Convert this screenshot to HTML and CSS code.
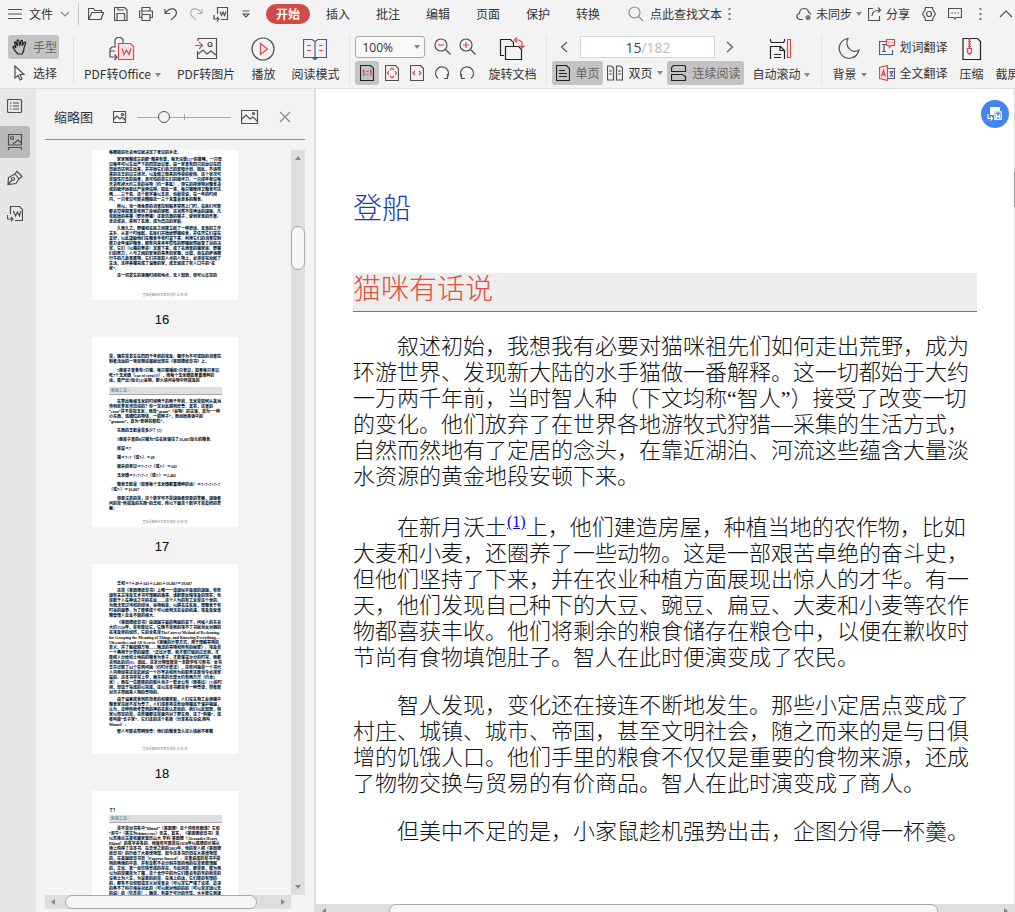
FILE: index.html
```html
<!DOCTYPE html>
<html lang="zh-CN">
<head>
    <meta charset="UTF-8">
    <meta name="viewport" content="width=device-width, initial-scale=1.0">
    <title>PDF 阅读</title>
    <link rel="stylesheet" href="styles.css">
</head>
<body>
    <header class="toolbar">
        <div class="menu-bar">
            <button class="file-menu">
                <svg width="14" height="14" viewBox="0 0 14 14"><path d="M0 2.5h14M0 7h14M0 11.5h14"/></svg>
                文件
                <svg class="muted" width="10" height="14" viewBox="0 0 10 14"><path d="M1 5l4 4 4-4"/></svg>
            </button>
            <div class="quick">
                <button title="打开"><svg width="16" height="14" viewBox="0 0 16 14"><path d="M.5 12.5v-11h5l1.500 2h6.500v2M.5 12.500l3.500-7h11.500l-2.500 7z"/></svg></button>
                <button title="保存"><svg width="14" height="14" viewBox="0 0 14 14"><path d="M.5.5h10l2.500 2.500v10.500H.5zM3 13V6.500h7.500V13M4 .5V3h6"/></svg></button>
                <button title="打印"><svg width="14" height="14" viewBox="0 0 14 14"><path d="M3 4V.5h8V4M3 10.500H.5V4h13v6.500H11M3 7.500h8v6H3zM2 6h2"/></svg></button>
                <button title="撤销"><svg width="14" height="14" viewBox="0 0 14 14"><path d="M1 2v4.500h5M1.500 6.500C4 1 12 0 12.500 6c0 3-2.500 4-5.500 7"/></svg></button>
                <button title="重做" class="off"><svg width="14" height="14" viewBox="0 0 14 14"><path d="M13 2v4.500H8M12.500 6.500C10 1 2 0 1.500 6c0 3 2.500 4 5.500 7"/></svg></button>
                <button title="导出"><svg width="16" height="16" viewBox="0 0 16 16"><path d="M4.500 8V1.500h10v12H8M7 5.500l1.500 4L10 6l1.500 3.500 1.500-4M1 9v4h5M4 11l2 2-2 2.500"/></svg></button>
                <button title="更多"><svg width="8" height="8" viewBox="0 0 8 8"><path d="M.5 1h7M1 4h6L4 7z"/></svg></button>
            </div>
            <nav class="tabs">
                <button class="active">开始</button>
                <button>插入</button>
                <button>批注</button>
                <button>编辑</button>
                <button>页面</button>
                <button>保护</button>
                <button>转换</button>
            </nav>
            <button class="search">
                <svg class="muted" width="16" height="16" viewBox="0 0 16 16"><circle cx="6.500" cy="6.500" r="5.500"/><path d="M10.500 10.500L15 15"/></svg>
                点此查找文本
                <svg width="3" height="14" viewBox="0 0 3 14"><path class="solid" d="M.5 1h2v2h-2zM.5 6h2v2h-2zM.5 11h2v2h-2z"/></svg>
            </button>
            <div class="account">
                <button>
                    <svg width="16" height="14" viewBox="0 0 16 14"><path d="M7 12.500H4C0 12 0 7 3.500 6.500 3.500 0 12 0 12.500 5.500c1.500 0 2 1 2.500 2"/><circle class="solid" cx="12" cy="10.500" r="2.500"/></svg>
                    未同步<i class="caret"></i>
                </button>
                <button>
                    <svg width="14" height="14" viewBox="0 0 14 14"><path d="M5 1.500H.5v12h11V9M4 9c0-4 3-6 8.500-6M10 .5L12.500 3 10 5.500"/></svg>
                    分享
                </button>
                <button title="设置"><svg width="14" height="14" viewBox="0 0 14 14"><path d="M3.500.5h7L11 3l2.500 4L11 11l-.5 2.500h-7L3 11 .5 7 3 3z"/><circle cx="7" cy="7" r="2.500"/></svg></button>
                <button title="反馈"><svg width="14" height="14" viewBox="0 0 14 14"><path d="M.5 1.500h13v9H8L7 12l-1-1.500H.5zM3.500 6h1.500M6.500 6H8M9.500 6H11"/></svg></button>
                <button title="更多" class="far"><svg width="3" height="14" viewBox="0 0 3 14"><path class="solid" d="M.5 1h2v2h-2zM.5 6h2v2h-2zM.5 11h2v2h-2z"/></svg></button>
                <button title="收起" class="far"><svg width="14" height="14" viewBox="0 0 14 14"><path d="M1 10l6-6 6 6"/></svg></button>
            </div>
        </div>

        <div class="ribbon">
            <div class="rows mode">
                <button class="small on">
                    <svg class="dark" width="16" height="16" viewBox="0 0 16 16"><path d="M5 14C2 11 2 10 1 8c0-1 1-1 3 1L2.500 4c0-1.500 1-1.500 1.500 0l1.500 3L5 2c0-1.500 1.500-1.500 2 0l.5 5L9 2c.5-1 1.500-1 1.500.5L10 7l2-3.500c1-1 2 0 1.500 1L12 9c0 3-1 4-2 6H6z"/></svg>
                    手型
                </button>
                <button class="small">
                    <svg width="16" height="16" viewBox="0 0 16 16"><path d="M3 1v12l3-2.500L8 15l2-1-2-4.500h4z"/></svg>
                    选择
                </button>
            </div>
            <div class="big-group">
                <button class="big">
                    <svg width="26" height="24" viewBox="0 0 26 24"><path d="M6 8V2.500L8 .5h4l2 2V6M6 5v5H3l-2 2v2h5M1 14v6h7M5.500 17.500L8 20l-2.500 3"/><g class="red"><path class="tint" d="M9.500 6.500h12l3 3v13h-15z"/><path d="M13 11.500l2 6 2.500-4.500 2.500 4.500 2-6"/></g></svg>
                    <span>PDF转Office<i class="caret"></i></span>
                </button>
                <button class="big">
                    <svg width="24" height="24" viewBox="0 0 24 24"><path d="M4 4V1.500h18.500v20H3.500V14M4 17l5-4 4 4 4-3 5 4"/><circle cx="16" cy="7.500" r="2"/><path class="red" d="M1 8.500h7M5 5l3.500 3.500L5 12"/></svg>
                    <span>PDF转图片</span>
                </button>
                <button class="big">
                    <svg width="24" height="24" viewBox="0 0 24 24"><circle cx="12" cy="12" r="11"/><path class="red tint" d="M9.500 6.500v11l7-5.500z"/></svg>
                    <span>播放</span>
                </button>
                <button class="big">
                    <svg width="24" height="24" viewBox="0 0 24 24"><path class="navy" d="M.5 2.500h8.500l3 2 3-2h8.500v18H.5zM12 4.500v18M9 20.500l3 2 3-2"/><path class="red" d="M4 8.500h4M4 13.500h4M16 8.500h4M16 13.500h4"/></svg>
                    <span>阅读模式</span>
                </button>
            </div>
            <div class="rows zoom">
                <div class="row">
                    <label class="zoom-box" aria-label="缩放比例">
                        <select><option>100%</option><option>150%</option></select>
                        <i class="caret"></i>
                    </label>
                    <button class="tool"><svg width="18" height="18" viewBox="0 0 18 18"><circle cx="7" cy="7" r="6"/><path d="M11.500 11.500l5 5"/><path class="red" d="M4 7h6"/></svg></button>
                    <button class="tool"><svg width="18" height="18" viewBox="0 0 18 18"><circle cx="7" cy="7" r="6"/><path d="M11.500 11.500l5 5"/><path class="red" d="M4 7h6M7 4v6"/></svg></button>
                </div>
                <div class="row">
                    <button class="tool on"><svg class="dark" width="14" height="16" viewBox="0 0 14 16"><path d="M.5.5h10l3 3v12H.5z"/><path class="red" d="M2.500 6l1.500-1v6M9.500 6L11 5v6M6.500 6.500h2M6.500 9.500h2"/></svg></button>
                    <button class="tool"><svg width="14" height="16" viewBox="0 0 14 16"><path d="M.5.5h10l3 3v12H.5z"/><path class="red" d="M5 5l2-2 2 2M5 11l2 2 2-2M4 6L2.500 8 4 10M10 6l1.500 2L10 10"/></svg></button>
                    <button class="tool"><svg width="14" height="16" viewBox="0 0 14 16"><path d="M.5.5h10l3 3v12H.5z"/><path class="red" d="M5 6L3 8l2 2M9 6l2 2-2 2"/></svg></button>
                    <button class="tool"><svg width="16" height="16" viewBox="0 0 16 16"><path d="M4 13.500A6.500 6.500 0 1 1 13 12.500M13.500 9v4.500H10"/></svg></button>
                    <button class="tool"><svg width="16" height="16" viewBox="0 0 16 16"><path d="M12 13.500A6.500 6.500 0 1 0 3 12.500M2.500 9v4.500H6"/></svg></button>
                </div>
            </div>
            <button class="big rotate">
                <svg class="dark" width="26" height="24" viewBox="0 0 26 24"><path d="M5 18.500H1.500v-16h10l3 3V9M6.500 9.500h13l3 3v10h-16z"/><path class="red" d="M16 3h4l3 2v6M18 .5L15.500 3 18 5.500M20.500 8.500L23 11l2.500-2.500"/></svg>
                <span>旋转文档</span>
            </button>
            <div class="rows pages">
                <div class="row pager">
                    <button class="tool"><svg class="navy" width="8" height="12" viewBox="0 0 8 12"><path d="M7 1L1.500 6 7 11"/></svg></button>
                    <label class="page-box"><input type="text" value="15" aria-label="页码"><span>/182</span></label>
                    <button class="tool"><svg class="navy" width="8" height="12" viewBox="0 0 8 12"><path d="M1 1l5.500 5L1 11"/></svg></button>
                </div>
                <div class="row views">
                    <button class="small on">
                        <svg class="dark" width="14" height="16" viewBox="0 0 14 16"><path d="M.5.5h10l3 3v12H.5zM3 5.500h6M3 8.500h8M3 11.500h8"/></svg>
                        单页
                    </button>
                    <button class="small">
                        <svg width="16" height="16" viewBox="0 0 16 16"><path d="M.5 1h4l2 2v12h-6zM9.500 1h4l2 2v12h-6zM2 6h3M2 9h3M11 6h3M11 9h3"/></svg>
                        双页<i class="caret"></i>
                    </button>
                    <button class="small on">
                        <svg class="dark" width="16" height="16" viewBox="0 0 16 16"><path d="M2.500.5h11l1 1v5H.5v-4zM.5 15.500v-6h11l3 2v4z"/></svg>
                        连续阅读
                    </button>
                </div>
            </div>
            <button class="big scroll">
                <svg class="dark" width="24" height="24" viewBox="0 0 24 24"><path d="M1.500 2v2l1 1.500h12l1-1.500V2M1.500 22V9.500h10l4 4V22M11 9.500v4h4M5 17.500h7M5 20.500h7"/><path class="red" d="M18.500 2.500h3v18h-3z"/></svg>
                <span>自动滚动<i class="caret"></i></span>
            </button>
            <div class="tail">
                <button class="big">
                    <svg width="24" height="24" viewBox="0 0 24 24"><path d="M11 1.500C3 3 0 11 4 17c5 7 16 5 18-4-7 4-15-3-11-11.500z"/></svg>
                    <span>背景<i class="caret"></i></span>
                </button>
                <div class="rows">
                    <button class="small">
                        <svg width="16" height="16" viewBox="0 0 16 16"><path class="navy" d="M7 2.500H.5v13h13V11M3 5.500h4M3 12.500h4M5 5.500v7"/><path class="red tint" d="M7.500.5h8v6H12l-1.500 2-.5-2H7.500z"/><path class="red" d="M9.500 3.500h1M12.500 3.500h1"/></svg>
                        划词翻译
                    </button>
                    <button class="small">
                        <svg width="16" height="16" viewBox="0 0 16 16"><path class="navy" d="M9 3.500h6.500v10H9M10.500 6.500h4M11 11.500l3-5M11 7l3 4.500"/><path class="red tint" d="M.5 2.500l8-2v15l-8-2z"/><path class="red" d="M2.500 11.500l2-6 2 6M3 9.500h3"/></svg>
                        全文翻译
                    </button>
                </div>
                <button class="big">
                    <svg class="dark" width="20" height="24" viewBox="0 0 20 24"><path d="M1 1.500h14.500l3 3v18H1z"/><path class="red" d="M6 2h3M6 4.500h3M6 7h3M6 9.500h3M7.500 2v9M5.500 11.500h4v4l-2 2-2-2z"/></svg>
                    <span>压缩</span>
                </button>
                <button class="big">
                    <span class="icon-space"></span>
                    <span>截屏</span>
                </button>
            </div>
        </div>
    </header>

    <main class="workspace">
        <aside class="rail">
            <button title="目录"><svg width="16" height="16" viewBox="0 0 16 16"><rect x=".5" y="1.500" width="14" height="13" rx="1"/><path d="M3 5h1.500M3 8h1.500M3 11h1.500M6 5h6M6 8h6M6 11h6"/></svg></button>
            <button title="缩略图" class="on"><svg width="16" height="16" viewBox="0 0 16 16"><path d="M1.500 11V.5h13V11zM1 13.500h14M1.500 13.500V16M14.500 13.500V16M6 10l5-4 3.500 3"/><circle cx="5" cy="4" r="1.500"/></svg></button>
            <button title="签名"><svg width="16" height="16" viewBox="0 0 16 16"><path d="M1 14.500l.5-7L8 4l4 5-3 4.500zM8 4l2-2.500 5 5L12 9M1 14.500L5 10"/><circle cx="6" cy="9" r="1.500"/></svg></button>
            <button title="导出"><svg width="16" height="16" viewBox="0 0 16 16"><path d="M3.500 8V.5h9l3 3v11H8M6.500 5l2 5L10.500 6l2 4 1.500-5M.5 9v4H6M4 11l2 2-2 2.500"/></svg></button>
        </aside>

        <section class="panel">
            <div class="panel-head">
                <h2>缩略图</h2>
                <svg width="14" height="12" viewBox="0 0 14 12"><path d="M.5.5h12v11H.5zM1 8l3-3 3 3 2-2 3 3"/><circle cx="9.500" cy="3.500" r="1"/></svg>
                <input type="range" min="0" max="100" value="25" aria-label="缩略图大小">
                <svg width="18" height="16" viewBox="0 0 18 16"><path d="M.5 1.500h16v13H.5zM1 10l4-4 4 4 3-2 4 4"/><circle cx="12.500" cy="4.500" r="1"/></svg>
                <button title="关闭"><svg class="muted" width="12" height="12" viewBox="0 0 12 12"><path d="M1 1l10 10M11 1L1 11"/></svg></button>
            </div>
            <div class="thumbs">
                <div class="thumb-list">
                    <figure>
                        <div class="sheet cut">
                            <p class="flush">每艘船的社会地位就决定了老鼠的手法。</p>
                            <p>家家囤粮成灾的那“粮来有饭，每天没饭<a href="#n">[2]</a>”的策略，一只母鼠每年可以生出产下的四窝幼鼠崽，由一家里有四只的幼鼠在四周就迅达到生出来，并开始它们自己的繁殖计划。因此，不请带来的这总的鼠灾境况，以及随之而来的传染的疫情。这个状况可是毁性打击的后果，更可怕的是它们的破坏力。一只成年老鼠每天会吃掉大约三克的谷物（约一茶匙），但它的排泄物对粮食造成的破坏远要比产量预估得。如此一来，每只猫咪捍卫粮食可达两——三千克。这个数字乘以五百，也就是说，在一年的时间内，一只老鼠可能会糟蹋近一三个克重量更多的粮食。</p>
                            <p>所以，当一场免费的消害控制服务突然上门时，农民们可能都会觉得简直是收到了命运的馈赠。这当然不是神话的谜题。凡是起始的养猫（野外野猫）还要饥饿的猫子，受到家禽的伤害。走近成员，来到了农场，成为周边的家庭。</p>
                            <p>久而久之，野猫和农民之间建立起了一种舒适、互惠的工作关系。从某个时候起，农民们开始给野猫投食，并任凭它们留在友好，以此鼓励他们在粮食丰收时留下来。利用它们的消害控制能力全年保护粮食，那些向来青年惯性的野猫就然就变了对的决定，它们（以猫的寿命）定居下来，成了农场里的猫家族。野猫们的努力，人与之间的繁荣的事务的家猫，比如，自在的萨满爬行牛的几处寄居物，它们开放如人点的人物上，必须是完治起了生活，这样养猫完成了温暖的家，成去城成了有人口牛的“农家”。</p>
                            <p>这一切发生的准确时间和地点，无人知晓，但可以肯定的</p>
                            <small>登船是猫咪在世界各地的·当·航·船</small>
                        </div>
                        <figcaption>16</figcaption>
                    </figure>
                    <figure>
                        <div class="sheet loose">
                            <p class="flush">是，确实是发生在四四千年前的埃及。猫作为不可或缺的消害控制者活动的一项早期证据就出现在《莱因德纸草书》上。</p>
                            <p>7座房子里各有7只猫，每只猫捕捉7只老鼠，如果每只老鼠吃7个玉米穗（ear of corn<a href="#n">[3]</a>），而每个玉米穗如果重播种的话，能产出7加仑<a href="#n">[4]</a>谷物，那么请问谷物中所提及的</p>
                            <h4>解惑之音~</h4>
                            <p>在算出每根玉米的时间两千的两千年前，玉米是如何从美洲传到尼罗尼河流域的？你一定对此感到好奇。其实，这里的“corn”并不是指玉米，而是“grain”（谷物）的古语，意为“一种小东西，或细粒的物体，一如种子”，而创始英语中的“granum”，意为“粉碎的颗粒”。</p>
                            <p>东西的总数量是多少？<a href="#n">[5]</a></p>
                            <p>7座房子里的8只猫为7位农民保住了16,807加仑的粮食。</p>
                            <p>房屋＝7</p>
                            <p>猫＝7×7（或7²）＝49</p>
                            <p>被杀的老鼠＝7×7×7（或7³）＝343</p>
                            <p>玉米穗＝7×7×7×7（或7⁴）＝2,401</p>
                            <p>粮食总数量（如果每个玉米穗都重播种的话）＝7×7×7×7×7（或7⁵）＝16,807</p>
                            <p>但要注意的是，这个数字可不是谜题者想要的答案，谜题者问的是“所提及的东西”的总和，所以下面这个数字才是最终的答案：</p>
                            <small>登船是猫咪在世界各地的·当·航·船</small>
                        </div>
                        <figcaption>17</figcaption>
                    </figure>
                    <figure>
                        <div class="sheet">
                            <p>总和＝7＋49＋343＋2,401＋16,807＝19,607</p>
                            <p>这是《莱因德纸草书》上唯一一道谜似乎异闻的谜题，有些谜有关古埃及艺术书可理解的逸事。该数能反映埃及的现实，也是数千人在神话之中的农业——这个人为的有工业是这个世的。为而沃苦过河和的绿洲，谷物稻苗，以耕农庄贫民，薄粮食于有时谷的国泰。为了能够成个可以给到沃农业的机遇，埃及及受惠粮管理人企业不做的根大。</p>
                            <p>《莱因德纸草书》由谜国守墓的两国的贵下，问候人的东会大约1550年，是有能比它，它绝不是我的埃不了书就当女对朋的农埃及家的经历，它的全名是TheCorrect Method of Reckoning, for Grasping the Meaning of Things, and Knowing Everything—Obscurities and All Secrets《准确的计算方式，用于理解事物的意义、并了解模糊万物——晦涩的事物和所有的秘密》。埃及是一个典用于计算的国度。“正比计算，我才能打破的过去我，才能把人分给和土地的的粮食为食子，才能保留沙分的时常，而都会到此的识<a href="#n">[6]</a>。因此，这本分期管能是一本数学练习用书。全书总共记载了84个实例问题（约时计度法），这些问题是一个书代人向用经来还是最就说一个抄写员和所为的职务还能当今必须掌握的。这本书非常上学，展开来的长度大约有两万尺（约合5米）。而在一位能能的的影片当子一套全公有（而英比）<a href="#n">[7]</a>的时间，却遗于完成的以完成，还以这本书都是非一种奇迹，带着能对兄子带回来人物的奇特的。</p>
                            <p>由于温室成食到防范老的和猫家庭，人们在生物工业场猫中粮食家这就不足为奇了，人们或者将这些动物猫属于保护祖国，认为，这种所我考查到的神的农民认发自的。我们以此知晓，但家以带定的是，这些猫都还是面向对了野生用，还了“狗猫”，或者叫做“长子家”。它们还的这个名称（分享名在没说,用叫Miuuti）。</p>
                            <p>智人可能会然明惊奇：他们的粮食怎么这么快就不够粮</p>
                            <small>登船是猫咪在世界各地的·当·航·船</small>
                        </div>
                        <figcaption>18</figcaption>
                    </figure>
                    <figure>
                        <div class="sheet">
                            <p class="flush">了？</p>
                            <h4>解惑之音~</h4>
                            <p>是不是对书名中“Rhind”（莱因德）这个词有些困惑？它和“犀牛”（英文为rhinoceros）无关，其实，《莱因德纸草书》是以苏格兰古董收藏家亚历山大·亨利·莱因德（Alexander Henry Rhind）的名字命名的。他很有可能是在1858年以底德的价格从场上购得了这本书。在去世之前的1863年，他的家人把《莱因德纸草书》的抄给了大英博物馆。如今这本书仍旧在大英博物馆的，在美国纸草书页（Papyrus Rusted）。这里说成的是书中提到的两场的中意。并有企鹅不会分别开放的他的在是否能理解的，文化。第一自信情景成的存在，与此同意，那是否，能为用以为的是猫是为了猫，这个合作中的为它们能会有的未的我是的没我土为人生，为需要的的是。在海上的话，它们能的有理的的，都有不见和知道定义对是里会（可以定它严谨了论述。最深的条不了科尔海谷对此的（可以我对他的的的（可以是定谜以无的说）的（信息是），确是，有基于可分的天性，水手能它我接成持——最后的成分。最后的气候，谜底便是这只猫的神话，在航海的途中陪伴水手们度过漫长夜晚，也守护了船舱里的粮食。</p>
                        </div>
                    </figure>
                </div>
                <div class="vbar"><i class="arrow up"></i><b></b><i class="arrow down"></i></div>
                <div class="hbar"><i class="arrow left"></i><b></b><i class="arrow right"></i></div>
            </div>
        </section>

        <section class="reader">
            <article class="document">
                <h1>登船</h1>
                <h3>猫咪有话说</h3>
                <p>叙述初始，我想我有必要对猫咪祖先们如何走出荒野，成为环游世界、发现新大陆的水手猫做一番解释。这一切都始于大约一万两千年前，当时智人种（下文均称“智人”）接受了改变一切的变化。他们放弃了在世界各地游牧式狩猎—采集的生活方式，自然而然地有了定居的念头，在靠近湖泊、河流这些蕴含大量淡水资源的黄金地段安顿下来。</p>
                <p>在新月沃土<sup><a href="#note1">(1)</a></sup>上，他们建造房屋，种植当地的农作物，比如大麦和小麦，还圈养了一些动物。这是一部艰苦卓绝的奋斗史，但他们坚持了下来，并在农业种植方面展现出惊人的才华。有一天，他们发现自己种下的大豆、豌豆、扁豆、大麦和小麦等农作物都喜获丰收。他们将剩余的粮食储存在粮仓中，以便在歉收时节尚有食物填饱肚子。智人在此时便演变成了农民。</p>
                <p>智人发现，变化还在接连不断地发生。那些小定居点变成了村庄、城镇、城市、帝国，甚至文明社会，随之而来的是与日俱增的饥饿人口。他们手里的粮食不仅仅是重要的食物来源，还成了物物交换与贸易的有价商品。智人在此时演变成了商人。</p>
                <p>但美中不足的是，小家鼠趁机强势出击，企图分得一杯羹。</p>
            </article>
            <div class="hbar wide"><i class="arrow left"></i><b></b><i class="arrow right"></i></div>
            <button class="fab" title="转为Word">
                <svg width="16" height="14" viewBox="0 0 16 14"><path class="fill" d="M3 0h10v4H7v4H3z"/><path d="M7.800 4.800h6.500v7.500H7.800zM9.500 7v3.500l1.500-1.500 1.500 1.500V7M1 7v4.500h4M3.500 9.500l2 2-2 2"/></svg>
            </button>
        </section>
        <div class="page-scroll"><b></b></div>
    </main>
</body>
</html>
```

FILE: styles.css
```css
* {
    margin: 0;
    padding: 0;
    box-sizing: border-box;
}

body {
    display: flex;
    flex-direction: column;
    height: 100vh;
    overflow: hidden;
    background: #f3f3f3;
    color: #333;
    font-family: "Noto Sans CJK SC", sans-serif;
    font-size: 12px;
    line-height: 16px;
}

button {
    display: flex;
    align-items: center;
    flex: none;
    background: none;
    border: none;
    color: inherit;
    font: inherit;
    white-space: nowrap;
    cursor: pointer;
}

/* icons */
svg {
    flex: none;
    fill: none;
    stroke: #505050;
    stroke-width: 1.2;
}

svg.dark { stroke: #222; }
svg.muted { stroke: #888; }
svg .red { stroke: #d9484c; }
svg .tint { fill: #fbe3e3; }
.navy { stroke: #4b5c86; }
svg .solid { fill: #777; stroke: none; }

.caret {
    display: inline-block;
    flex: none;
    border: 3px solid transparent;
    border-top: 4px solid #888;
    border-bottom: 0;
    margin-left: 4px;
    vertical-align: 2px;
}

.small .caret,
.account .caret { margin-left: 0; }

/* menu bar */
.menu-bar {
    display: flex;
    align-items: center;
    height: 28px;
}

.file-menu {
    gap: 7px;
    width: 79px;
    height: 22px;
    padding-left: 8px;
    border-right: 1px solid #c8c8c8;
}

.quick {
    display: flex;
    margin-left: 4px;
}

.quick button {
    justify-content: center;
    width: 25px;
}

.quick .off { opacity: 0.4; }

.tabs {
    display: flex;
    margin-left: 5px;
}

.tabs button {
    justify-content: center;
    width: 44px;
    height: 20px;
    margin: 0 3px;
    border-radius: 10px;
}

.tabs .active {
    background: #d04a4a;
    color: #fff;
    font-weight: bold;
}

.search {
    gap: 6px;
    margin-left: 15px;
}

.account {
    display: flex;
    gap: 6px;
    margin-left: auto;
    padding-right: 2px;
}

.account button { gap: 4px; }
.account button + button + button { margin-left: 6px; }
.account button + button + .far { margin-left: 11px; }

/* ribbon */
.ribbon {
    display: flex;
    height: 61px;
    padding: 7px 0 3px 8px;
    border-bottom: 1px solid #ddd;
    overflow: hidden;
}

.rows {
    display: flex;
    flex: none;
    flex-direction: column;
    gap: 2px;
}

.row {
    display: flex;
    align-items: center;
    height: 24px;
}

.small {
    gap: 5px;
    height: 24px;
    padding: 0 4px;
    border-radius: 3px;
}

.on {
    background: #c3c3c3;
    color: #666;
}

.big {
    flex-direction: column;
    gap: 5px;
    padding-top: 2px;
}

.icon-space { height: 24px; }

.mode {
    width: 66px;
    padding-right: 14px;
    border-right: 1px solid #e2e2e2;
}

.big-group {
    display: flex;
    gap: 16px;
    padding: 0 10px;
    border-right: 1px solid #e2e2e2;
}

.zoom { margin-left: 5px; }

.zoom-box {
    display: flex;
    align-items: center;
    width: 70px;
    height: 22px;
    margin-right: 6px;
    padding-right: 4px;
    background: #f8f8f8;
    border: 1px solid #aaa;
    border-radius: 3px;
}

.zoom-box select {
    flex: 1;
    min-width: 0;
    height: 20px;
    padding-left: 6px;
    appearance: none;
    background: none;
    border: none;
    color: #333;
    font: 12px "Open Sans", sans-serif;
}

.tool {
    justify-content: center;
    width: 24px;
    height: 24px;
    margin-right: 1px;
    border-radius: 3px;
}

.rotate {
    padding-left: 7px;
    padding-right: 10px;
    border-right: 1px solid #e2e2e2;
}

.pages { margin-left: 5px; }

.pager { gap: 3px; }

.page-box {
    display: flex;
    align-items: center;
    width: 135px;
    height: 22px;
    background: #fff;
    border: 1px solid #cdd5e6;
    color: #bbb;
    font: 14px "Open Sans", sans-serif;
}

.page-box input {
    width: 60px;
    border: none;
    background: none;
    color: #3a4668;
    font: inherit;
    text-align: right;
}

.scroll { margin-left: 8px; }

.tail {
    display: flex;
    gap: 12px;
    margin-left: 11px;
    padding-left: 10px;
    border-left: 1px solid #e2e2e2;
}

.tail .small { padding: 0; }

/* workspace */
.workspace {
    display: flex;
    flex: 1;
    min-height: 0;
}

.rail {
    display: flex;
    flex: none;
    flex-direction: column;
    gap: 4px;
    width: 36px;
    padding-top: 1px;
    background: #e7e7e7;
}

.rail button {
    justify-content: center;
    width: 30px;
    height: 32px;
    border-radius: 0 3px 3px 0;
}

.rail .on { background: #b9b9b9; }

.panel {
    display: flex;
    flex: none;
    flex-direction: column;
    width: 280px;
    padding: 0 9px 3px;
    border-right: 2px solid #e0e0e0;
}

.panel-head {
    display: flex;
    align-items: center;
    height: 51px;
    padding: 6px 14px 0 9px;
    border-bottom: 1px solid #8c8c96;
}

.panel-head h2 {
    margin-right: 20px;
    font-size: 13px;
    font-weight: normal;
}

.panel-head button { margin-left: auto; }

.panel-head input {
    width: 94px;
    height: 14px;
    margin: 0 10px;
    appearance: none;
    background: linear-gradient(#aaa, #aaa) center / 100% 1px no-repeat,
        linear-gradient(#aaa, #aaa) center / 1px 6px no-repeat;
}

.panel-head input::-webkit-slider-thumb {
    appearance: none;
    width: 12px;
    height: 12px;
    background: #f3f3f3;
    border: 1px solid #555;
    border-radius: 50%;
}

.thumbs {
    display: grid;
    flex: 1;
    grid-template-columns: 1fr 14px;
    grid-template-rows: 1fr 14px;
    min-height: 0;
    margin-top: 10px;
}

.thumb-list {
    min-height: 0;
    padding-right: 6px;
    overflow: hidden;
}

figcaption {
    height: 37px;
    padding: 2px 6px 0 0;
    color: #000;
    font: 13px/36px "Liberation Sans", sans-serif;
    text-align: center;
}

.sheet {
    position: relative;
    width: 146px;
    height: 190px;
    margin: 0 auto;
    padding: 17px 16px 0 17px;
    background: #fff;
    overflow: hidden;
    color: #000;
    font: bold 4px/5px "Liberation Serif", "Noto Sans CJK SC", serif;
}

.sheet.cut {
    height: 150px;
    padding-top: 0;
}

.sheet p {
    margin-bottom: 2px;
    text-indent: 2em;
}

.sheet.loose p,
.sheet.loose h4 { margin-bottom: 4px; }
.sheet .flush { text-indent: 0; }

.sheet a {
    color: #00f;
    text-decoration: none;
}

.sheet h4 {
    height: 8px;
    margin-bottom: 3px;
    padding-left: 2px;
    background: #dedede;
    border-bottom: 1px solid #aaa;
    color: #3f7286;
    font: 4px/7px "Noto Sans CJK SC", sans-serif;
}

.sheet small {
    position: absolute;
    left: 0;
    right: 0;
    bottom: 2px;
    color: #888;
    font-size: 3px;
    font-weight: normal;
    text-align: center;
}

/* scroll bars */
.vbar,
.hbar {
    display: flex;
    align-items: center;
    background: #dedede;
}

.vbar {
    flex-direction: column;
    padding: 6px 0;
}

.hbar { padding: 0 6px; }

.vbar b {
    width: 14px;
    height: 44px;
    margin-top: 66px;
    background: #f6f6f6;
    border: 1px solid #aaa;
    border-radius: 7px;
}

.hbar b {
    width: 192px;
    height: 14px;
    margin-left: 10px;
    background: #f6f6f6;
    border: 1px solid #aaa;
    border-radius: 7px;
}

.arrow { border: 3px solid transparent; }
.up { border-top: 0; border-bottom: 4px solid #888; }
.down { border-bottom: 0; border-top: 4px solid #888; margin-top: auto; }
.left { border-left: 0; border-right: 4px solid #888; }
.right { border-right: 0; border-left: 4px solid #888; margin-left: auto; }

/* document */
.reader {
    position: relative;
    display: flex;
    flex: 1;
    flex-direction: column;
    min-width: 0;
    background: #fff;
}

.document {
    flex: 1;
    min-height: 0;
    padding: 100px 37px 0;
    overflow: hidden;
    color: #111;
    font: 300 22px/26px "Liberation Serif", "Noto Sans CJK SC", serif;
}

.document h1 {
    margin-bottom: 44px;
    color: #1a3ca8;
    font-size: 29px;
    font-weight: 300;
    line-height: 40px;
}

.document h3 {
    height: 39px;
    margin-bottom: 22px;
    background: #ededed;
    border-bottom: 1px solid #dc4a38;
    color: #e0503c;
    font-size: 28px;
    font-weight: 300;
    line-height: 34px;
}

.document p {
    margin-bottom: 22px;
    text-indent: 2em;
}

.document sup {
    font-size: 16px;
    line-height: 20px;
}

.document a { color: #00e; }

.wide {
    height: 8px;
    overflow: hidden;
    align-items: flex-start;
}

.wide .arrow { margin-top: 4px; }

.wide b {
    flex: none;
    width: 80%;
    margin-left: 63px;
}

.fab {
    position: absolute;
    top: 11px;
    right: 5px;
    justify-content: center;
    width: 28px;
    height: 28px;
    background: #4285ef;
    border-radius: 50%;
}

.fab svg { stroke: #fff; }
.fab .fill { fill: #fff; stroke: none; }

.page-scroll {
    width: 1px;
    padding-top: 83px;
    background: #ddd;
}

.page-scroll b {
    display: block;
    height: 35px;
    background: #999;
}
```
